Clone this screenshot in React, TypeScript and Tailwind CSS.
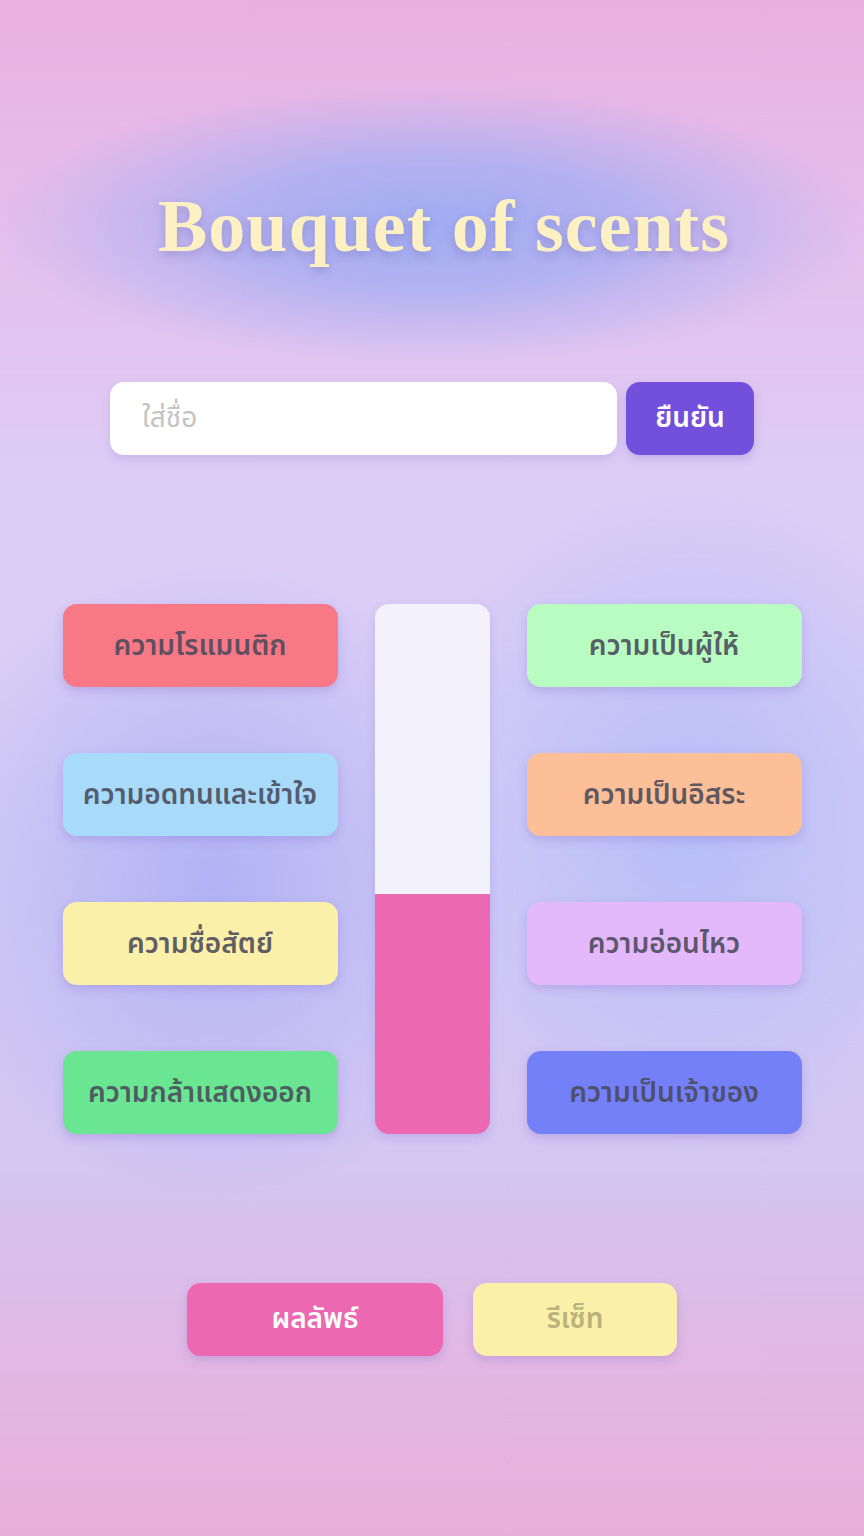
import React, { useState } from 'react';

interface Trait {
  label: string;
  bg: string;
}

const leftTraits: Trait[] = [
  { label: 'ความโรแมนติก', bg: 'bg-[#f87886]' },
  { label: 'ความอดทนและเข้าใจ', bg: 'bg-[#a8dbfa]' },
  { label: 'ความซื่อสัตย์', bg: 'bg-[#fbf0aa]' },
  { label: 'ความกล้าแสดงออก', bg: 'bg-[#6ae592]' },
];

const rightTraits: Trait[] = [
  { label: 'ความเป็นผู้ให้', bg: 'bg-[#b9fcc2]' },
  { label: 'ความเป็นอิสระ', bg: 'bg-[#fdbf98]' },
  { label: 'ความอ่อนไหว', bg: 'bg-[#e4b9fc]' },
  { label: 'ความเป็นเจ้าของ', bg: 'bg-[#7480f8]' },
];

const thai = "font-['Noto_Sans_Thai','Noto_Sans','Noto_Sans_CJK_SC',sans-serif]";

const TraitButton = ({ trait }: { trait: Trait }) => (
  <button
    className={`${trait.bg} h-[83px] w-[275px] rounded-[14px] pt-[3px] text-[28px] font-semibold text-[#4a4a5a]/90 shadow-[0_4px_10px_rgba(120,90,200,0.25)]`}
  >
    {trait.label}
  </button>
);

const App = () => {
  const [name, setName] = useState('');

  return (
    <div
      className={`${thai} flex min-h-[1536px] w-full flex-col items-center bg-[radial-gradient(ellipse_440px_140px_at_50%_225px,#a0acf2_0%,rgba(166,174,242,0.8)_45%,transparent_100%),radial-gradient(ellipse_300px_320px_at_25%_880px,rgba(170,174,244,0.85)_0%,transparent_100%),radial-gradient(ellipse_300px_340px_at_80%_820px,rgba(176,186,248,0.85)_0%,transparent_100%),linear-gradient(180deg,#e9b0df_0%,#e6bfec_15%,#dccdf6_32%,#d6cdf6_55%,#d3c6f2_75%,#e3b6e2_90%,#e8afdc_100%)]`}
    >
      <h1 className="mt-[184px] pl-[24px] font-['Liberation_Serif',serif] text-[74px] font-bold leading-[84px] tracking-[1px] text-[#fdf0c2] [text-shadow:0_4px_10px_rgba(80,60,140,0.25)]">
        Bouquet of scents
      </h1>

      <div className="mt-[114px] flex gap-[9px]">
        <input
          type="text"
          value={name}
          onChange={(e) => setName(e.target.value)}
          placeholder="ใส่ชื่อ"
          className="h-[73px] w-[507px] rounded-[14px] bg-white px-8 text-[28px] text-gray-700 shadow-[0_4px_10px_rgba(120,90,200,0.2)] outline-none placeholder:text-[#c4c4c4]"
        />
        <button className="h-[73px] w-[128px] rounded-[14px] bg-[#7250dc] text-[28px] font-semibold text-white shadow-[0_4px_10px_rgba(120,90,200,0.25)]">
          ยืนยัน
        </button>
      </div>

      <div className="mt-[149px] flex gap-[37px]">
        <div className="flex flex-col gap-[66px]">
          {leftTraits.map((t) => (
            <TraitButton key={t.label} trait={t} />
          ))}
        </div>

        <div className="flex h-[530px] w-[115px] flex-col overflow-hidden rounded-[14px] shadow-[0_4px_10px_rgba(120,90,200,0.2)]">
          <div className="h-[290px] bg-[#f3f2fc]" />
          <div className="flex-1 bg-[#ec68b0]" />
        </div>

        <div className="flex flex-col gap-[66px]">
          {rightTraits.map((t) => (
            <TraitButton key={t.label} trait={t} />
          ))}
        </div>
      </div>

      <div className="mt-[149px] flex gap-[30px]">
        <button className="h-[73px] w-[256px] rounded-[14px] bg-[#ec68b0] text-[28px] font-semibold text-white shadow-[0_4px_10px_rgba(120,90,200,0.25)]">
          ผลลัพธ์
        </button>
        <button className="h-[73px] w-[204px] rounded-[14px] bg-[#fbf0aa] text-[28px] font-semibold text-[#b9b27a] shadow-[0_4px_10px_rgba(120,90,200,0.25)]">
          รีเซ็ท
        </button>
      </div>
    </div>
  );
};

export default App;
